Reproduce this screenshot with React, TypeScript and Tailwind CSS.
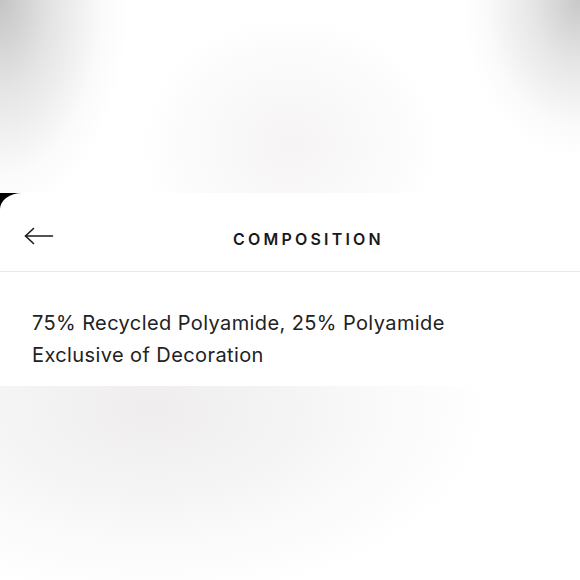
import React from 'react';

const ArrowLeft: React.FC = () => (
  <svg width="30" height="18" viewBox="0 0 30 18" fill="none" stroke="#1a1a1a" strokeWidth="1.6" strokeLinecap="round" strokeLinejoin="round">
    <path d="M1.5 9H28.5" />
    <path d="M9.5 1.5L1.5 9L9.5 16.5" />
  </svg>
);

export default function App() {
  return (
    <div className="w-[580px] h-[580px] flex flex-col overflow-hidden bg-white" style={{ fontFamily: 'Inter, "Liberation Sans", sans-serif' }}>
      {/* backdrop above the sheet */}
      <div className="h-[193px] shrink-0 bg-[radial-gradient(ellipse_130px_220px_at_0%_0%,#c4c4c4_0%,#e4e4e4_40%,#fbfbfb_80%,transparent_100%),radial-gradient(ellipse_120px_160px_at_100%_0%,#c8c8c8_0%,#e6e6e6_40%,#fbfbfb_80%,transparent_100%),radial-gradient(ellipse_150px_130px_at_50%_75%,#f6f4f4_0%,#fbfafa_60%,#ffffff_100%)]" />

      {/* sheet */}
      <div className="bg-black shrink-0">
        <div className="bg-white rounded-tl-[22px_16px]">
          <header className="h-[79px] flex items-center pt-[14px] pl-[24px] border-b border-[#ebeae8]">
            <button className="mb-[6px] p-0 flex items-center">
              <ArrowLeft />
            </button>
            <h1 className="ml-[179px] text-[16px] font-semibold tracking-[0.2em] text-[#1a1a1a] leading-none">
              COMPOSITION
            </h1>
          </header>
          <div className="pt-[35px] pb-[15px] px-[32px] text-[20px] leading-[32px] tracking-[0.02em] text-[#222222]">
            <p>75% Recycled Polyamide, 25% Polyamide</p>
            <p>Exclusive of Decoration</p>
          </div>
        </div>
      </div>

      {/* backdrop below the sheet */}
      <div className="flex-1 bg-[radial-gradient(ellipse_340px_190px_at_26%_12%,#efeded_0%,#f4f3f3_35%,#fafafa_70%,#ffffff_100%)]" />
    </div>
  );
}
